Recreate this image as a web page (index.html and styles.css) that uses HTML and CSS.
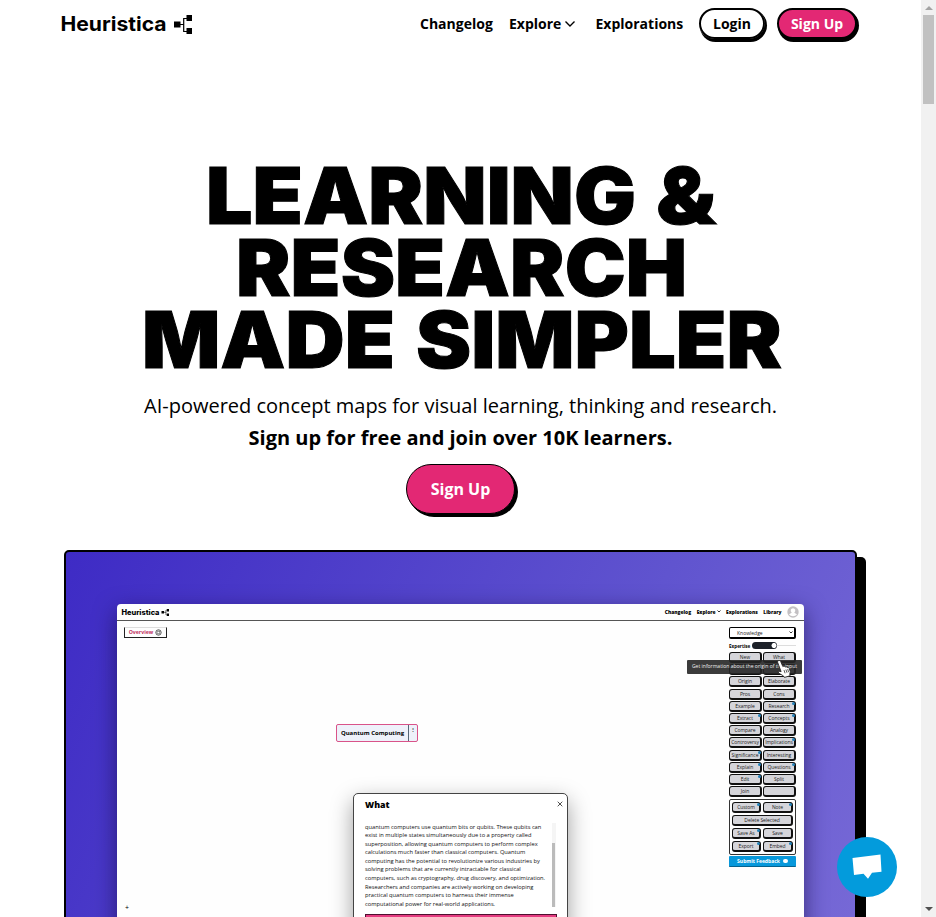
FILE: index.html
```html
<!DOCTYPE html>
<html lang="en">
<head>
<meta charset="utf-8">
<title>Heuristica</title>
<link rel="stylesheet" href="styles.css">
</head>
<body>
<div class="page">
  <header class="nav">
    <div class="brand">
      <svg width="107" height="30" viewBox="0 0 107 30"><text class="brand-text" x="-0.500" y="23" textLength="106" lengthAdjust="spacingAndGlyphs">Heuristica</text></svg>
      <svg class="brand-icon" width="19" height="20" viewBox="0 0 19 20"><path d="M0 6.500h6.500v6H0zM12.500 0h5.500v6h-5.500zM12.500 13h5.500v6h-5.500z"/><path d="M6 9.500h4M13 3.500h-3.300v13H13" fill="none" stroke="#000" stroke-width="1.200"/></svg>
    </div>
    <nav class="links">
      <a class="l1">Changelog</a>
      <a class="l2">Explore <svg width="12" height="8" viewBox="0 0 12 8"><path d="M1.500 1.500L6 6l4.500-4.500" fill="none" stroke="#000" stroke-width="1.400"/></svg></a>
      <a class="l3">Explorations</a>
      <a class="pill login">Login</a>
      <a class="pill signup">Sign Up</a>
    </nav>
  </header>
  <section class="hero">
    <h1><svg width="660" height="216" viewBox="131 158 660 216">
      <text x="206" y="223.500" textLength="430" lengthAdjust="spacingAndGlyphs">LEARNING</text>
      <text x="656" y="223.500" textLength="60" lengthAdjust="spacingAndGlyphs">&amp;</text>
      <text x="236" y="295.500" textLength="451" lengthAdjust="spacingAndGlyphs">RESEARCH</text>
      <text x="142" y="367.500" textLength="253" lengthAdjust="spacingAndGlyphs">MADE</text>
      <text x="416" y="367.500" textLength="366" lengthAdjust="spacingAndGlyphs">SIMPLER</text>
    </svg></h1>
    <p class="lead">AI-powered concept maps for visual learning, thinking and research.</p>
    <p class="lead strong">Sign up for free and join over 10K learners.</p>
    <a class="cta">Sign Up</a>
  </section>
  <section class="demo">
    <div class="window">
      <div class="win-bar">
        <svg width="49" height="14" viewBox="0 0 49 14"><text class="mini-brand" x="0.500" y="10" textLength="38" lengthAdjust="spacingAndGlyphs">Heuristica</text><path d="M40.500 6h2.500v2.500h-2.500zM46 4h2v2.500h-2zM46 8.500h2V11h-2z"/><path d="M43 7.300h2M47 5h-2v5h2" fill="none" stroke="#000" stroke-width=".6"/></svg>
        <div class="win-links"><span>Changelog</span><span>Explore <svg width="4" height="3" viewBox="0 0 4 3"><path d="M.5.5L2 2 3.500.5" fill="none" stroke="#000" stroke-width=".8"/></svg></span><span>Explorations</span><span>Library</span>
        <svg class="avatar" width="12" height="12" viewBox="0 0 12 12"><circle cx="6" cy="6" r="5.700" fill="#c3c0c3"/><path d="M6 2.200a2.300 2.300 0 0 1 1.300 4.200c.2 1 2.200 1 2.700 2a5.300 5.300 0 0 1-8 0c.5-1 2.500-1 2.700-2A2.300 2.300 0 0 1 6 2.200z" fill="#fff"/></svg></div>
      </div>
      <div class="canvas">
        <div class="overview">Overview <svg width="7" height="7" viewBox="0 0 7 7"><circle cx="3.500" cy="3.500" r="2.700" fill="none" stroke="#333" stroke-width=".8"/><path d="M2 3.500l1-1.500 2 .6-.4 2-1.600.4z" fill="none" stroke="#333" stroke-width=".6"/></svg></div>
        <div class="node"><span>Quantum Computing</span><i>⋮</i></div>
        <div class="modal">
          <div class="modal-head"><b>What</b><svg width="6" height="6" viewBox="0 0 6 6"><path d="M.7.7l4.600 4.600M5.300.7L.7 5.300" stroke="#222" stroke-width=".8"/></svg></div>
          <div class="modal-body">
            <div class="copy">quantum computers use quantum bits or qubits. These qubits can<br>exist in multiple states simultaneously due to a property called<br>superposition, allowing quantum computers to perform complex<br>calculations much faster than classical computers. Quantum<br>computing has the potential to revolutionize various industries by<br>solving problems that are currently intractable for classical<br>computers, such as cryptography, drug discovery, and optimization.<br>Researchers and companies are actively working on developing<br>practical quantum computers to harness their immense<br>computational power for real-world applications.</div>
            <div class="track"><div class="thumb"></div></div>
          </div>
          <div class="modal-btn"></div>
        </div>
        <div class="plus">+</div>
        <aside class="panel">
          <div class="select">Knowledge<svg width="4" height="3" viewBox="0 0 4 3"><path d="M.5.5L2 2 3.500.5" fill="none" stroke="#000" stroke-width=".8"/></svg></div>
          <div class="expertise"><b>Expertise</b><span class="slider"></span><span class="rail"></span></div>
          <div class="tools">
            <span>New</span><span>What</span><span></span><span></span><span>Origin</span><span>Elaborate</span><span>Pros</span><span>Cons</span><span>Example</span><span class="dot">Research</span><span class="dot">Extract</span><span class="dot">Concepts</span><span>Compare</span><span>Analogy</span><span>Controversy</span><span class="dot">Implications</span><span class="dot">Significance</span><span>Interesting</span><span class="dot">Explain</span><span class="dot">Questions</span><span class="dot">Edit</span><span>Split</span><span>Join</span><span></span>
          </div>
          <div class="group"><span class="dot">Custom</span><span class="dot">Note</span><span class="wide">Delete Selected</span><span class="dot">Save As</span><span>Save</span><span class="dot">Export</span><span class="dot">Embed</span></div>
          <div class="feedback">Submit Feedback <i></i></div>
        </aside>
        <div class="tip">Get information about the origin of the input</div>
        <svg class="hand" width="16" height="20" viewBox="0 0 15 18"><path d="M2.200 1.200Q3.700.5 4.400 2l2 4.700.3-.2q1.200-.6 1.900.6.900-.8 1.900.4 1.200-.4 1.900.9l1 3.100-.5 2.400.4 1.400-5.400 1.600-.8-1.300-4.700-2.900q-.7-1.200.4-1.600l2 .4L1.600 3Q1.200 1.800 2.200 1.200z" fill="#fff" stroke="#222" stroke-width=".8"/><path d="M7.500 10l1 3M9.300 9.500l1 3M11 9l.8 3" stroke="#222" stroke-width=".7"/></svg>
      </div>
    </div>
  </section>
</div>
<div class="chat"><svg width="30" height="26" viewBox="0 0 30 26"><path d="M.5 4L28.500.5l1 17.300-9.500 1-4 6-4.500-5L2 21z" fill="#fff"/></svg></div>
<div class="scrollbar"><i class="up"></i><div class="bar"></div><i class="down"></i></div>
</body>
</html>
```
FILE: styles.css
```css
* { box-sizing: border-box; }
html, body { margin: 0; height: 917px; overflow: hidden; background: #fff; }
body { display: flex; font-family: "Open Sans", "Noto Sans", sans-serif; color: #000; }
svg { display: block; flex: none; overflow: visible; }
.page { width: 921px; height: 917px; overflow: hidden; flex: none; }
.nav { height: 48px; display: flex; justify-content: space-between; padding: 0 64px 0 61px; }
.brand { display: flex; padding-top: 8px; gap: 6px; }
.brand-text { font: 700 20px Inter, sans-serif; }
.brand-icon { margin-top: 7px; }
.links { display: flex; align-items: center; font-weight: 700; font-size: 14px; white-space: nowrap; height: 47px; }
.l1 { width: 89px; }
.l2 { width: 86.500px; display: flex; align-items: center; gap: 3px; }
.l3 { width: 103.500px; }
.pill { height: 31px; border: 2px solid #000; border-radius: 16px; box-shadow: 1px 1px 0 #000, 2px 2px 0 #000, 1px 3px 0 #000; text-align: center; line-height: 27px; }
.login { width: 66px; margin-right: 12px; }
.signup { width: 80px; background: #e32874; color: #fff; }
.hero { padding-top: 110px; text-align: center; display: flex; flex-direction: column; align-items: center; height: 502px; }
h1 { margin: 0; font: 900 78px Inter, sans-serif; height: 216px; }
h1 text { stroke: #000; stroke-width: 1px; }
.lead { margin: 0; font-size: 20px; line-height: 32px; white-space: nowrap; }
.lead:first-of-type { margin-top: 16px; }
.strong { font-weight: 700; }
.cta { width: 109px; height: 50px; margin: 10px 0 0 0; border: 1px solid #000; border-radius: 25px; box-shadow: 1px 1px 0 #000, 2px 2px 0 #000, 3px 3px 0 #000; background: #e32874; color: #fff; font-weight: 700; font-size: 16px; line-height: 49px; }
.demo { margin-left: 64px; width: 793px; height: 500px; border: 2px solid #000; border-radius: 5px; box-shadow: 9px 7px 0 #000; background: linear-gradient(115deg, #3e2bc5 0%, #6054cf 60%, #7a6cd7 100%); padding: 51.500px 0 0 51px; }
.window { width: 687px; height: 440px; background: #fefefe; border-radius: 4px; box-shadow: 0 7px 22px rgba(20,10,65,.62); }
.win-bar { height: 17px; border-bottom: 1px solid #555; display: flex; justify-content: space-between; padding: 1px 5px 1px 4px; }
.mini-brand { font: 800 7px Inter, sans-serif; }
.win-links { display: flex; align-items: center; font-weight: 800; font-size: 4.900px; gap: 5.500px; }
.win-links span { display: flex; align-items: center; gap: 1px; }
.canvas { position: relative; height: 423px; }
.overview { position: absolute; left: 7px; top: 6px; width: 43px; height: 11px; border: 1px solid #222; border-top-color: #ddd; font-size: 5.200px; color: #bf315f; font-weight: 700; display: flex; align-items: center; justify-content: center; gap: 2px; }
.node { position: absolute; left: 219px; top: 103px; width: 82px; height: 18px; border: 1px solid #d95389; border-radius: 2px; background: #eef1fa; display: flex; font-size: 6px; line-height: 16px; font-weight: 700; white-space: nowrap; }
.node span { width: 72px; text-align: center; border-right: 1px solid #567; }
.node i { font-size: 4px; font-style: normal; width: 8px; line-height: 10px; text-align: center; }
.modal { position: absolute; left: 236px; top: 172px; width: 215px; height: 251px; background: #fff; border: 1px solid #444; border-radius: 5px; box-shadow: 0 8px 22px rgba(0,0,0,.38); padding: 5px 10px 0 11px; }
.modal-head { display: flex; justify-content: space-between; height: 24px; font-size: 8.800px; line-height: 12px; }
.modal-head b { font-weight: 800; }
.modal-head svg { margin: 2px -6px 0 0; }
.modal-body { display: flex; justify-content: space-between; height: 91px; }
.copy { font-size: 5.720px; line-height: 8.600px; white-space: nowrap; color: #111; }
.track { width: 4px; height: 84px; background: #f5f5f5; padding-top: 20px; margin-right: 1px; }
.thumb { width: 3px; height: 64px; background: #bbb; }
.modal-btn { height: 12px; border: 1px solid #501030; background: #e53b80; }
.plus { position: absolute; left: 8px; top: 282px; font-size: 7px; line-height: 9px; }
.panel { position: absolute; left: 612px; top: 6.500px; width: 67px; font-size: 5px; color: #222; }
.select { height: 12px; border: 1px solid #000; border-right-width: 2px; border-bottom-width: 2px; border-radius: 2px; display: flex; align-items: center; justify-content: space-between; padding: 0 1px 0 7px; background: #fff; }
.expertise { height: 13px; display: flex; align-items: center; font-size: 4.600px; }
.expertise b { width: 23px; color: #000; }
.slider { width: 25px; height: 7px; border-radius: 4px; background: radial-gradient(circle at 22px 3.500px, #fff 2.200px, #1b2028 2.800px); }
.rail { height: 1px; flex: 1; background: #ddd; }
.tools { display: grid; grid-template-columns: 33px 33px; column-gap: 1px; grid-auto-rows: 12.200px; }
.tools span, .group span { position: relative; height: 11px; border: 1px solid #111; border-right-width: 2px; border-bottom-width: 2px; border-radius: 3px; background: #d5d5da; line-height: 8px; text-align: center; white-space: nowrap; letter-spacing: -.05px; }
.dot::after { content: ""; position: absolute; right: -1px; top: 0; width: 3px; height: 3px; border-radius: 50%; background: #2582b9; }
.group { margin-top: 1px; height: 56px; border: 1px solid #333; border-radius: 2px; display: grid; grid-template-columns: 29px 30px; column-gap: 2px; grid-auto-rows: 12.900px; padding: 2px 2px; }
.group .wide { grid-column: 1 / 3; }
.feedback { margin-top: 1px; height: 11px; background: #0798db; border-bottom: 1px solid #06628e; border-radius: 1px; color: #fff; font-size: 5px; font-weight: 700; display: flex; align-items: center; justify-content: center; gap: 3px; white-space: nowrap; }
.feedback i { width: 5px; height: 4px; border-radius: 2px; background: #fff; }
.tip { position: absolute; left: 570px; top: 39px; width: 115px; height: 14px; background: rgba(38,38,38,.9); color: #eee; font-size: 5.050px; line-height: 13px; text-align: center; white-space: nowrap; border-radius: 1px; }
.hand { position: absolute; left: 659px; top: 38px; }
.chat { position: absolute; left: 837px; top: 837px; width: 60px; height: 60px; border-radius: 50%; background: #039bdc; display: flex; align-items: center; justify-content: center; }
.scrollbar { width: 15px; height: 917px; background: #f1f1f1; display: flex; flex-direction: column; align-items: center; flex: none; }
.scrollbar i { border: 4px solid transparent; border-top: 0; border-bottom: 4px solid #a3a3a3; margin: 6px 0 5px; width: 0; height: 0; }
.scrollbar .bar { width: 11px; height: 89px; background: #c1c1c1; }
.scrollbar .down { transform: rotate(180deg); border-bottom-color: #505050; margin: auto 0 6px; }
```
